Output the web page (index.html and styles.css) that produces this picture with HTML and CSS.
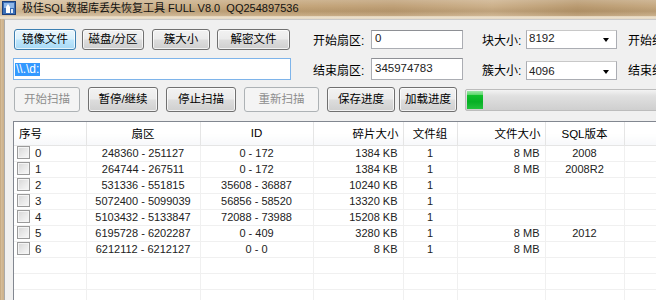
FILE: index.html
```html
<!DOCTYPE html>
<html>
<head>
<meta charset="utf-8">
<link rel="stylesheet" href="styles.css">
</head>
<body>
<div class="titlebar">
  <svg class="appicon" width="14" height="14" viewBox="0 0 14 14">
    <rect x="0.5" y="0.5" width="13" height="13" fill="#3a6fb8" stroke="#1d3f78"/>
    <rect x="2" y="2" width="10" height="5" fill="#8fb7e8"/>
    <path d="M4 12 L4 6 L6 3 L8 6 L8 12 Z" fill="#ffffff"/>
    <path d="M9 12 L9 8 L11 8 L11 12 Z" fill="#dfe9f7"/>
  </svg>
  <span class="title">极佳SQL数据库丢失恢复工具 FULL V8.0&nbsp;&nbsp;QQ254897536</span>
</div>
<div class="band"></div>
<div class="frame">
  <div class="client">
    <div class="row row1">
      <div class="left">
        <button class="btn focus w62">镜像文件</button>
        <button class="btn w62 ml6">磁盘/分区</button>
        <button class="btn w58 ml8">簇大小</button>
        <button class="btn w73 ml7">解密文件</button>
      </div>
      <span class="label lab1">开始扇区:</span>
      <div class="edit e1">0</div>
      <span class="label lab2">块大小:</span>
      <div class="combo c1"><span>8192</span><i class="arrow"></i></div>
      <span class="label lab3">开始组</span>
    </div>
    <div class="row row2">
      <div class="left">
        <div class="path"><span class="sel">\\.\d:</span></div>
      </div>
      <span class="label lab1">结束扇区:</span>
      <div class="edit e2">345974783</div>
      <span class="label lab2">簇大小:</span>
      <div class="combo c2"><span>4096</span><i class="arrow"></i></div>
      <span class="label lab3">结束组</span>
    </div>
    <div class="row row3">
      <button class="btn big dis w65 ml1">开始扫描</button>
      <button class="btn big w69 ml9">暂停/继续</button>
      <button class="btn big w69 ml9">停止扫描</button>
      <button class="btn big dis w74 ml8">重新扫描</button>
      <button class="btn big w68 ml8">保存进度</button>
      <button class="btn big w58 ml4">加载进度</button>
      <div class="progress"><div class="chunk"></div></div>
    </div>
    <div class="list">
      <table>
        <colgroup>
          <col class="k0"><col class="k1"><col class="k2"><col class="k3"><col class="k4"><col class="k5"><col class="k6"><col>
        </colgroup>
        <thead>
          <tr>
            <th class="tl">序号</th><th>扇区</th><th>ID</th><th class="tr">碎片大小</th><th>文件组</th><th class="tr">文件大小</th><th>SQL版本</th><th></th>
          </tr>
        </thead>
        <tbody>
          <tr><td class="tl"><i class="cb"></i>0</td><td>248360 - 251127</td><td>0 - 172</td><td class="tr">1384 KB</td><td>1</td><td class="tr">8 MB</td><td>2008</td><td></td></tr>
          <tr><td class="tl"><i class="cb"></i>1</td><td>264744 - 267511</td><td>0 - 172</td><td class="tr">1384 KB</td><td>1</td><td class="tr">8 MB</td><td>2008R2</td><td></td></tr>
          <tr><td class="tl"><i class="cb"></i>2</td><td>531336 - 551815</td><td>35608 - 36887</td><td class="tr">10240 KB</td><td>1</td><td class="tr"></td><td></td><td></td></tr>
          <tr><td class="tl"><i class="cb"></i>3</td><td>5072400 - 5099039</td><td>56856 - 58520</td><td class="tr">13320 KB</td><td>1</td><td class="tr"></td><td></td><td></td></tr>
          <tr><td class="tl"><i class="cb"></i>4</td><td>5103432 - 5133847</td><td>72088 - 73988</td><td class="tr">15208 KB</td><td>1</td><td class="tr"></td><td></td><td></td></tr>
          <tr><td class="tl"><i class="cb"></i>5</td><td>6195728 - 6202287</td><td>0 - 409</td><td class="tr">3280 KB</td><td>1</td><td class="tr">8 MB</td><td>2012</td><td></td></tr>
          <tr><td class="tl"><i class="cb"></i>6</td><td>6212112 - 6212127</td><td>0 - 0</td><td class="tr">8 KB</td><td>1</td><td class="tr">8 MB</td><td></td><td></td></tr>
          <tr class="empty"><td></td><td></td><td></td><td></td><td></td><td></td><td></td><td></td></tr>
          <tr class="empty"><td></td><td></td><td></td><td></td><td></td><td></td><td></td><td></td></tr>
          <tr class="empty"><td></td><td></td><td></td><td></td><td></td><td></td><td></td><td></td></tr>
          <tr class="empty"><td></td><td></td><td></td><td></td><td></td><td></td><td></td><td></td></tr>
        </tbody>
      </table>
    </div>
  </div>
</div>
</body>
</html>
```
FILE: styles.css
```css
* { box-sizing: border-box; }
html, body {
  margin: 0;
  padding: 0;
}
body {
  width: 656px;
  height: 300px;
  overflow: hidden;
  background: #c9ad84;
  font-family: "Liberation Sans", "Noto Sans CJK SC", sans-serif;
  font-size: 11px;
  color: #000;
}
.titlebar {
  height: 16px;
  display: flex;
  align-items: center;
  background:
    linear-gradient(180deg, rgba(255,255,255,0.18) 0%, rgba(255,255,255,0) 40%, rgba(90,60,20,0.12) 70%, rgba(255,255,255,0.1) 100%),
    linear-gradient(90deg, #d8c3a3 0%, #cdb38f 20%, #c4a57a 45%, #bfa077 60%, #ccb08a 75%, #b99a70 88%, #c5a880 100%);
  padding-left: 2px;
}
.appicon { flex: none; }
.title {
  margin-left: 6px;
  font-size: 11px;
  color: #111;
  white-space: nowrap;
  line-height: 16px;
}
.band {
  height: 3px;
  background: linear-gradient(180deg, #e2d2b8 0%, #efe5d4 70%, #d9cdb9 100%);
}
.frame {
  padding-left: 4px;
  height: 281px;
  background: linear-gradient(90deg, #b8976c 0px, #d7bf9c 1px, #cdb28c 3px);
}
.client {
  height: 281px;
  background: #f0f0f0;
  border-left: 1px solid #a9a9a9;
  border-top: 1px solid #c9c9c9;
  padding-left: 8px;
  overflow: hidden;
  width: 652px;
}
.row {
  display: flex;
  align-items: center;
  white-space: nowrap;
}
.row1 { margin-top: 8px; height: 22px; }
.row2 { margin-top: 8px; height: 22px; }
.row3 { margin-top: 7px; height: 25px; }
.left {
  width: 278px;
  display: flex;
  align-items: center;
  flex: none;
}
.row1 .left { padding-left: 1px; }
.btn {
  font-family: "Liberation Sans", "Noto Sans CJK SC", sans-serif;
  font-size: 11.5px;
  height: 21px;
  padding: 0;
  border: 1px solid #707070;
  border-radius: 3px;
  color: #000;
  background: linear-gradient(180deg, #f2f2f2 0%, #ebebeb 48%, #dddddd 52%, #cfcfcf 100%);
  box-shadow: inset 0 0 0 1px rgba(255,255,255,0.7);
  flex: none;
  line-height: 19px;
}
.btn.big { height: 25px; }
.btn.focus {
  border-color: #3c7fb1;
  background: linear-gradient(180deg, #eaf6fd 0%, #d9f0fc 48%, #bee6fd 52%, #a7d9f5 100%);
}
.btn.dis {
  border-color: #adb2b5;
  background: #f4f4f4;
  color: #8d8d8d;
  box-shadow: none;
}
.w58 { width: 58px; } .w62 { width: 62px; } .w65 { width: 66px; } .w68 { width: 68px; }
.w69 { width: 70px; } .w73 { width: 73px; } .w74 { width: 75px; }
.ml1 { margin-left: 1px; } .ml4 { margin-left: 4px; } .ml6 { margin-left: 6px; }
.ml7 { margin-left: 7px; } .ml8 { margin-left: 8px; } .ml9 { margin-left: 8px; }
.label {
  font-size: 12px;
  flex: none;
}
.lab1 { margin-left: 22px; width: 58px; }
.lab2 { margin-left: 19px; width: 44px; }
.lab3 { margin-left: 11px; }
.edit {
  width: 92px;
  background: #fff;
  border: 1px solid #abadb3;
  border-top-color: #8e9095;
  padding-left: 3px;
  font-size: 11.5px;
  flex: none;
  color: #222;
}
.e1 { height: 19px; line-height: 15px; }
.e2 { height: 22px; line-height: 19px; }
.combo {
  width: 91px;
  height: 19px;
  background: #fff;
  border: 1px solid #abadb3;
  border-top-color: #c8c8c8;
  display: flex;
  align-items: center;
  justify-content: space-between;
  padding: 0 7px 0 2px;
  font-size: 11.5px;
  flex: none;
  color: #222;
}
.c1 { align-items: flex-start; line-height: 15px; }
.c2 { margin-top: 3px; }
.arrow {
  width: 0;
  height: 0;
  border-left: 3.5px solid transparent;
  border-right: 3.5px solid transparent;
  border-top: 4px solid #000;
  margin-top: 2px;
}
.c1 .arrow { margin-top: 7px; }
.path {
  width: 278px;
  height: 22px;
  background: #fff;
  border: 1px solid #7eb4ea;
  padding-left: 1px;
  display: flex;
  align-items: center;
  font-size: 12px;
}
.sel {
  background: #3399ff;
  color: #fff;
  padding: 0 1px;
  line-height: 13px;
}
.progress {
  margin-left: 8px;
  width: 200px;
  height: 22px;
  border: 1px solid #bcbcbc;
  border-radius: 2px;
  background: linear-gradient(180deg, #f3f3f3 0%, #e0e0e0 30%, #cfcfcf 100%);
  padding: 1px;
  flex: none;
  margin-top: 1px;
}
.chunk {
  width: 16px;
  height: 18px;
  background: linear-gradient(180deg, #9ee6a8 0%, #5fd86e 20%, #0fbf2a 25%, #06b025 60%, #22c23c 100%);
}
.list {
  margin-top: 9px;
  width: 700px;
  height: 190px;
  background: #fff;
  border: 1px solid #828790;
  border-right: none;
}
table {
  border-collapse: collapse;
  table-layout: fixed;
  width: 700px;
}
.k0 { width: 72px; } .k1 { width: 114px; } .k2 { width: 113px; } .k3 { width: 90px; }
.k4 { width: 54px; } .k5 { width: 88px; } .k6 { width: 79px; }
th {
  height: 23px;
  font-weight: normal;
  font-size: 11.5px;
  text-align: center;
  background: linear-gradient(180deg, #ffffff 0%, #ffffff 50%, #f7f8fa 100%);
  border-right: 1px solid #e5e5e5;
  border-bottom: 1px solid #e5e5e5;
  padding: 0 4px;
  white-space: nowrap;
}
td {
  height: 16px;
  padding: 0 5px;
  text-align: center;
  border-right: 1px solid #f0f0f0;
  border-bottom: 1px solid #f0f0f0;
  white-space: nowrap;
  font-size: 11px;
  color: #222;
  line-height: 15px;
}
.tl { text-align: left; padding-left: 5px; }
.tr { text-align: right; }
td.tl { padding-left: 3px; font-size: 11.5px; }
.cb {
  display: inline-block;
  width: 13px;
  height: 13px;
  border: 1px solid #9a9a9a;
  background: linear-gradient(135deg, #d6d6d6 0%, #ececec 60%, #f8f8f8 100%);
  box-shadow: inset 0 0 0 1px #f4f4f4;
  vertical-align: -2px;
  margin-right: 5px;
}
.empty td { height: 16px; }
```
